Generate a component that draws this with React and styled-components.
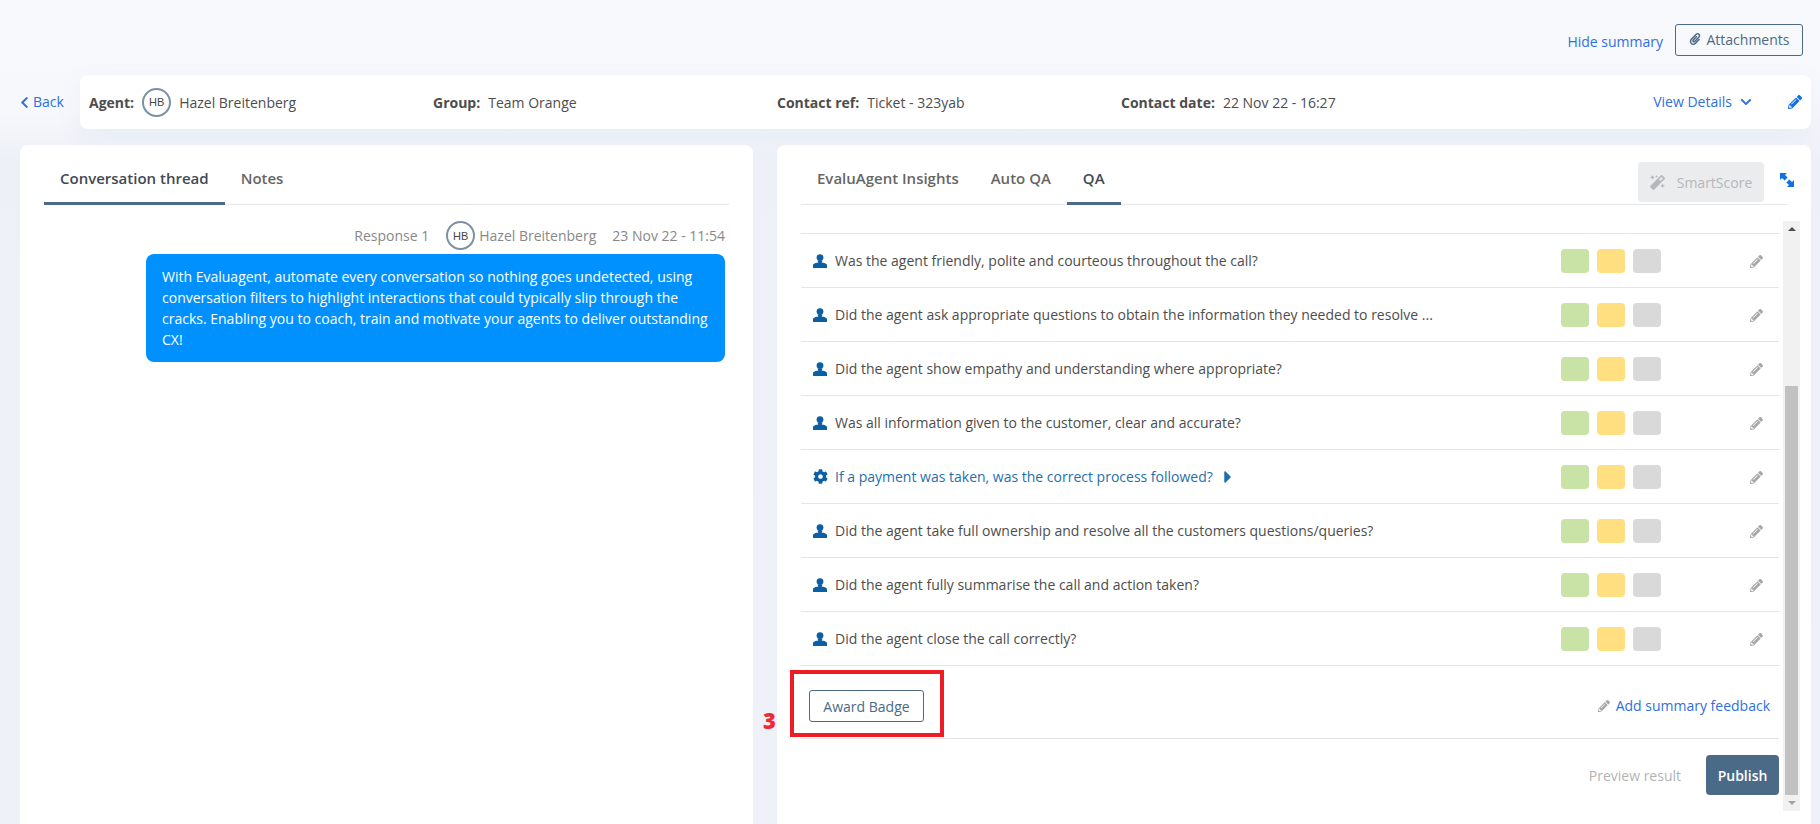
import styled, { createGlobalStyle } from "styled-components";
import { FaChevronLeft, FaChevronDown, FaPencilAlt, FaCog, FaCaretRight, FaMagic, FaPaperclip } from "react-icons/fa";

const GlobalStyle = createGlobalStyle`
  html, body {
    margin: 0;
    height: 100%;
    overflow: hidden;
    background: #f7f9fc;
    font-family: "Open Sans", "Liberation Sans", sans-serif;
    font-size: 14px;
    color: #4d4d4d;
  }
`;

const Page = styled.div`
  height: 824px;
  overflow: hidden;
  display: flex;
  flex-direction: column;
  padding: 0 9px 0 20px;
  box-sizing: border-box;
  position: relative;
  background: linear-gradient(to bottom, #f7f9fc 0, #f6f8fc 110px, #edf0f7 160px, #eef1f8 100%);
`;

const TopRow = styled.div`
  height: 75px;
  flex: none;
  display: flex;
  justify-content: flex-end;
  align-items: flex-start;
  padding: 24px 8px 0 0;
  box-sizing: border-box;
  gap: 12px;
`;

const TextLink = styled.a`
  color: #2f6fe0;
  font-size: 14px;
  line-height: 20px;
  display: inline-flex;
  align-items: center;
`;

const HideLink = styled(TextLink)`
  margin-top: 8px;
  margin-left: -1px;
`;

const OutlineButton = styled.button`
  font-family: inherit;
  font-size: 14px;
  color: #4a6a87;
  background: transparent;
  border: 1px solid #4a6a87;
  border-radius: 3px;
  display: inline-flex;
  align-items: center;
  justify-content: center;
  padding: 0;
`;

const AttachButton = styled(OutlineButton)`
  width: 128px;
  height: 32px;
  gap: 6px;
  padding-bottom: 2px;
`;

const SummaryRow = styled.div`
  display: flex;
  align-items: center;
  height: 54px;
  flex: none;
`;

const BackLink = styled(TextLink)`
  width: 60px;
  gap: 2px;
  flex: none;
  svg {
    margin-left: -2px;
  }
`;

const SummaryBar = styled.div`
  flex: 1;
  height: 54px;
  background: #fff;
  border-radius: 8px;
  box-shadow: 0 8px 24px rgba(120, 140, 180, 0.08);
  display: flex;
  align-items: center;
  padding: 0 9px;
`;

const Field = styled.div`
  width: 344px;
  flex: none;
  display: flex;
  align-items: center;
  gap: 8px;
`;

const Label = styled.span`
  font-weight: 700;
  color: #4d4d4d;
`;

const Avatar = styled.span`
  width: 29px;
  height: 29px;
  box-sizing: border-box;
  border: 2px solid #7d91a6;
  border-radius: 50%;
  background: #fff;
  display: inline-flex;
  align-items: center;
  justify-content: center;
  font-size: 11px;
  font-family: "Liberation Sans", sans-serif;
  color: #444;
  flex: none;
`;

const BarEnd = styled.div`
  margin-left: auto;
  display: flex;
  align-items: center;
`;

const DetailsLink = styled(TextLink)`
  gap: 8px;
  margin-right: 36px;
`;

const Panels = styled.div`
  display: grid;
  grid-template-columns: 733px 1034px;
  gap: 24px;
  margin-top: 16px;
  flex: 1;
  min-height: 0;
`;

const Card = styled.section`
  background: #fff;
  border-radius: 8px 8px 0 0;
  padding: 0 24px;
  min-height: 0;
  display: flex;
  flex-direction: column;
`;

const TabHead = styled.div`
  display: flex;
  align-items: flex-start;
  justify-content: space-between;
  height: 60px;
  flex: none;
  border-bottom: 1px solid #e3e5e8;
  box-sizing: border-box;
  position: relative;
`;

const Tabs = styled.div`
  display: flex;
`;

const Tab = styled.div`
  height: 60px;
  box-sizing: border-box;
  padding: 23px 16px 0;
  line-height: 20px;
  font-weight: 600;
  font-size: 15px;
  color: ${(p) => (p.$active ? "#3f4a54" : "#666")};
  border-bottom: 3px solid ${(p) => (p.$active ? "#4a6a87" : "transparent")};
  margin-bottom: -1px;
`;

const SmartButton = styled.div`
  width: 126px;
  height: 40px;
  margin: 17px 23px 0 0;
  border-radius: 4px;
  background: #ebecee;
  color: #b5b7ba;
  display: flex;
  align-items: center;
  justify-content: center;
  gap: 12px;
`;

const ExpandIcon = styled.svg`
  position: absolute;
  right: -7px;
  top: 28px;
`;

const ResponseMeta = styled.div`
  display: flex;
  justify-content: flex-end;
  align-items: center;
  height: 29px;
  margin: 16px 4px 4px 0;
  color: #888;
`;

const ResponseLabel = styled.span`
  margin-right: 17px;
`;

const Author = styled.span`
  margin: 0 16px 0 4px;
`;

const Bubble = styled.div`
  margin: 0 4px 0 102px;
  background: #0091ff;
  color: #fff;
  border-radius: 8px;
  padding: 12px 16px;
  line-height: 21px;
  height: 108px;
  box-sizing: border-box;
`;

const RightBody = styled.div`
  display: flex;
  margin-top: 16px;
  gap: 4px;
  flex: 1;
  min-height: 0;
`;

const QaColumn = styled.div`
  width: 978px;
  flex: none;
  padding-top: 12px;
`;

const Question = styled.div`
  height: 54px;
  box-sizing: border-box;
  border-top: 1px solid #e3e5e8;
  display: flex;
  align-items: center;
  padding-left: 12px;
`;

const QuestionIcon = styled.span`
  width: 22px;
  flex: none;
  display: inline-flex;
  align-items: center;
  color: #0b5fa5;
`;

const QuestionText = styled.span`
  flex: 1;
  color: ${(p) => (p.$link ? "#1f6fae" : "#4d4d4d")};
  display: inline-flex;
  align-items: center;
  gap: 5px;
`;

const Swatches = styled.div`
  display: flex;
  gap: 8px;
  margin-right: 89px;
`;

const Swatch = styled.span`
  width: 28px;
  height: 24px;
  border-radius: 4px;
  background: ${(p) => p.$color};
`;

const EditIcon = styled.span`
  display: inline-flex;
  color: #a8a8a8;
  margin: 1px 16px 0 0;
`;

const BadgeRow = styled.div`
  height: 74px;
  box-sizing: border-box;
  border-top: 1px solid #e3e5e8;
  border-bottom: 1px solid #e3e5e8;
  display: flex;
  align-items: center;
  justify-content: space-between;
  padding: 8px 9px 0 8px;
  position: relative;
`;

const BadgeButton = styled(OutlineButton)`
  width: 115px;
  height: 32px;
`;

const HighlightBox = styled.div`
  position: absolute;
  left: -11px;
  top: 4px;
  width: 154px;
  height: 67px;
  box-sizing: border-box;
  border: 4px solid #ee1c25;
`;

const StepNumber = styled.span`
  position: absolute;
  left: -38px;
  top: 40px;
  font-size: 22px;
  line-height: 28px;
  font-weight: 800;
  color: #ee2a33;
`;

const FeedbackLink = styled(TextLink)`
  gap: 6px;
`;

const FeedbackIcon = styled.span`
  display: inline-flex;
  color: #a8a8a8;
`;

const Footer = styled.div`
  display: flex;
  align-items: center;
  justify-content: flex-end;
  margin-top: 16px;
  gap: 25px;
`;

const PreviewText = styled.span`
  color: #b4b4b4;
`;

const PublishButton = styled.button`
  width: 73px;
  height: 40px;
  background: #4a6a87;
  color: #fff;
  font-family: inherit;
  font-size: 14px;
  font-weight: 600;
  border: 0;
  border-radius: 4px;
`;

const Scrollbar = styled.div`
  width: 17px;
  height: 590px;
  background: #f1f1f1;
  display: flex;
  flex-direction: column;
  align-items: center;
  flex: none;
`;

const ScrollArrow = styled.span`
  height: 16px;
  flex: none;
  display: flex;
  align-items: center;
  justify-content: center;
  &::before {
    content: "";
    border-left: 4px solid transparent;
    border-right: 4px solid transparent;
    ${(p) => (p.$down ? "border-top: 4px solid #a3a3a3;" : "border-bottom: 4px solid #505050;")}
  }
`;

const ScrollThumb = styled.div`
  width: 13px;
  height: 409px;
  background: #c1c1c1;
  margin-top: auto;
`;

const PersonIcon = () => (
  <svg width="14" height="14" viewBox="0 0 14 14" fill="currentColor">
    <circle cx="7" cy="3.6" r="3.4" />
    <path d="M4.6 6.5C4.8 8 5.4 8.6 5.4 8.6 3.2 9 .2 9.6 0 11.2V14h14v-2.8c-.2-1.6-3.2-2.2-5.4-2.6 0 0 .6-.6.8-2.1z" />
  </svg>
);

const questions = [
  { text: "Was the agent friendly, polite and courteous throughout the call?" },
  { text: "Did the agent ask appropriate questions to obtain the information they needed to resolve ..." },
  { text: "Did the agent show empathy and understanding where appropriate?" },
  { text: "Was all information given to the customer, clear and accurate?" },
  { text: "If a payment was taken, was the correct process followed?", auto: true },
  { text: "Did the agent take full ownership and resolve all the customers questions/queries?" },
  { text: "Did the agent fully summarise the call and action taken?" },
  { text: "Did the agent close the call correctly?" },
];

export default function App() {
  return (
    <Page>
      <GlobalStyle />
      <TopRow>
        <HideLink>Hide summary</HideLink>
        <AttachButton>
          <FaPaperclip size={12} />
          Attachments
        </AttachButton>
      </TopRow>

      <SummaryRow>
        <BackLink>
          <FaChevronLeft size={13} />
          Back
        </BackLink>
        <SummaryBar>
          <Field>
            <Label>Agent:</Label>
            <Avatar>HB</Avatar>
            <span>Hazel Breitenberg</span>
          </Field>
          <Field>
            <Label>Group:</Label>
            <span>Team Orange</span>
          </Field>
          <Field>
            <Label>Contact ref:</Label>
            <span>Ticket - 323yab</span>
          </Field>
          <Field>
            <Label>Contact date:</Label>
            <span>22 Nov 22 - 16:27</span>
          </Field>
          <BarEnd>
            <DetailsLink>
              View Details
              <FaChevronDown size={12} />
            </DetailsLink>
            <TextLink>
              <FaPencilAlt size={14} color="#0f6fe8" />
            </TextLink>
          </BarEnd>
        </SummaryBar>
      </SummaryRow>

      <Panels>
        <Card>
          <TabHead>
            <Tabs>
              <Tab $active>Conversation thread</Tab>
              <Tab>Notes</Tab>
            </Tabs>
          </TabHead>
          <ResponseMeta>
            <ResponseLabel>Response 1</ResponseLabel>
            <Avatar>HB</Avatar>
            <Author>Hazel Breitenberg</Author>
            <span>23 Nov 22 - 11:54</span>
          </ResponseMeta>
          <Bubble>
            With Evaluagent, automate every conversation so nothing goes undetected, using conversation filters to
            highlight interactions that could typically slip through the cracks. Enabling you to coach, train and
            motivate your agents to deliver outstanding CX!
          </Bubble>
        </Card>

        <Card>
          <TabHead>
            <Tabs>
              <Tab>EvaluAgent Insights</Tab>
              <Tab>Auto QA</Tab>
              <Tab $active>QA</Tab>
            </Tabs>
            <SmartButton>
              <FaMagic size={15} />
              SmartScore
            </SmartButton>
            <ExpandIcon width="14" height="14" viewBox="0 0 14 14" fill="#0f6fe8">
              <path d="M0 0h7L5 2l2.6 2.6-3 3L2 5 0 7z" />
              <path d="M14 14H7l2-2-2.6-2.6 3-3L12 9l2-2z" />
            </ExpandIcon>
          </TabHead>
          <RightBody>
            <QaColumn>
              {questions.map((q) => (
                <Question key={q.text}>
                  <QuestionIcon>{q.auto ? <FaCog size={15} /> : <PersonIcon />}</QuestionIcon>
                  <QuestionText $link={q.auto}>
                    {q.text}
                    {q.auto && <FaCaretRight size={20} />}
                  </QuestionText>
                  <Swatches>
                    <Swatch $color="#c9e2a5" />
                    <Swatch $color="#ffdf80" />
                    <Swatch $color="#d9d9d9" />
                  </Swatches>
                  <EditIcon>
                    <FaPencilAlt size={13} />
                  </EditIcon>
                </Question>
              ))}
              <BadgeRow>
                <BadgeButton>Award Badge</BadgeButton>
                <HighlightBox />
                <StepNumber>3</StepNumber>
                <FeedbackLink>
                  <FeedbackIcon>
                    <FaPencilAlt size={12} />
                  </FeedbackIcon>
                  Add summary feedback
                </FeedbackLink>
              </BadgeRow>
              <Footer>
                <PreviewText>Preview result</PreviewText>
                <PublishButton>Publish</PublishButton>
              </Footer>
            </QaColumn>
            <Scrollbar>
              <ScrollArrow />
              <ScrollThumb />
              <ScrollArrow $down />
            </Scrollbar>
          </RightBody>
        </Card>
      </Panels>
    </Page>
  );
}
